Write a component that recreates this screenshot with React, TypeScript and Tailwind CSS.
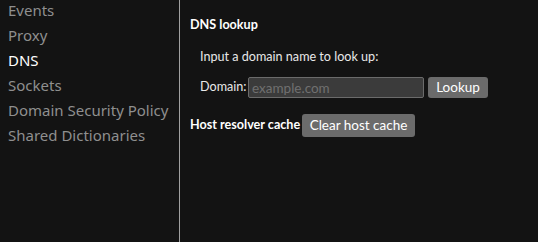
import React from "react";

export default function App() {
  const items = ["Events", "Proxy", "DNS", "Sockets", "Domain Security Policy", "Shared Dictionaries"];
  return (
    <div
      className="flex w-[538px] h-[242px] overflow-hidden bg-[#131313] text-[#e8e8e8]"
      style={{ fontFamily: '"Noto Sans", "Open Sans", sans-serif' }}
    >
      <div className="w-[180px] shrink-0 border-r border-[#a0a0a0] overflow-hidden">
        <ul className="mt-[-2px] pl-[8px]">
          {items.map((t) => (
            <li
              key={t}
              className={`h-[25px] leading-[25px] text-[15px] whitespace-nowrap ${
                t === "DNS" ? "text-white" : "text-[#8f8f8f]"
              }`}
            >
              {t}
            </li>
          ))}
        </ul>
      </div>
      <div
        className="flex-1 pl-[10px] pt-[16px] text-[12.6px]"
        style={{ fontFamily: 'Lato, "Noto Sans", sans-serif' }}
      >
        <div className="font-bold text-white h-[18px] leading-[18px]">DNS lookup</div>
        <div className="pl-[10px] mt-[14px] h-[18px] leading-[18px] text-[#e8e8e8]">
          Input a domain name to look up:
        </div>
        <div className="pl-[10px] mt-[11px] flex items-center h-[21px]">
          <span className="w-[48px] shrink-0">Domain:</span>
          <input
            className="w-[176px] h-[21px] bg-[#3b3b3b] border border-[#6b6b6b] rounded-[2px] px-[3px] text-[13.5px] text-[#e8e8e8] placeholder:text-[#707070] outline-none"
            style={{ fontFamily: 'Lato, "Noto Sans", sans-serif' }}
            placeholder="example.com"
          />
          <button className="ml-[4px] w-[60px] h-[21px] bg-[#6b6b6b] rounded-[3px] text-[13.5px] text-white">
            Lookup
          </button>
        </div>
        <div className="mt-[16px] flex items-center h-[23px]">
          <span className="font-bold text-white w-[112px] shrink-0 whitespace-nowrap">Host resolver cache</span>
          <button className="w-[113px] h-[23px] bg-[#6b6b6b] rounded-[3px] text-[13.5px] text-white">
            Clear host cache
          </button>
        </div>
      </div>
    </div>
  );
}
